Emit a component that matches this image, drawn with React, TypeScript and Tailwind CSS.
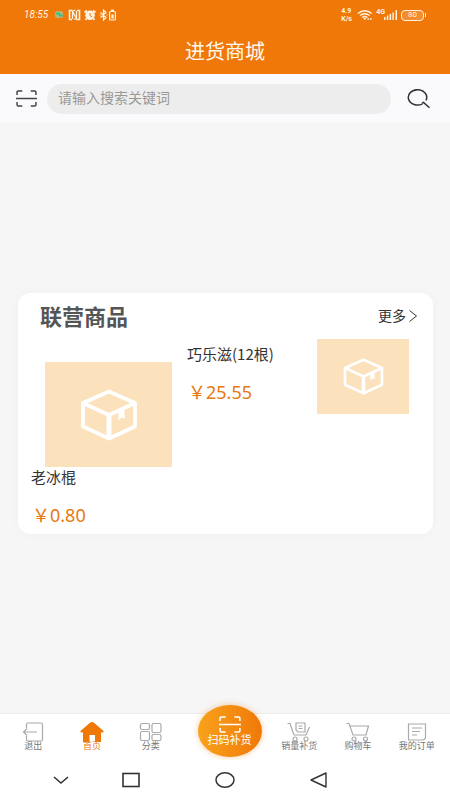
import type { ReactNode } from "react";

interface IconProps {
  className?: string;
}

interface TabItemProps {
  label: string;
  icon: ReactNode;
  active?: boolean;
}

function ScanIcon({ className }: IconProps) {
  return (
    <svg viewBox="0 0 20 17" preserveAspectRatio="none" className={className} fill="none" stroke="currentColor" strokeWidth={1.4}>
      <path d="M1 5V2.2Q1 1 2.2 1H6M14 1h3.8Q19 1 19 2.2V5M1 12v2.8Q1 16 2.2 16H6M14 16h3.8Q19 16 19 14.8V12M0 8.5h20" />
    </svg>
  );
}

function BoxIcon({ className }: IconProps) {
  return (
    <svg viewBox="0 0 56 52" className={className} fill="none" stroke="#fff" strokeWidth={3.8} strokeLinejoin="round">
      <path d="M28 2.5 54 14v23.5L28 49.500 2 37.500V14Z" />
      <path d="M2 14 28 26 54 14" />
      <path d="M28 26v23" strokeWidth={5} />
      <path d="M37.500 21 43.500 18.500V29.500L40.500 28.800 37.500 31.500Z" fill="#fff" stroke="none" />
    </svg>
  );
}

function StatusBar() {
  return (
    <div className="flex h-[30px] items-center justify-between pl-6 pr-6 text-[#fff3e0]">
      <div className="flex items-center">
        <span className="w-[26px] font-['Roboto',sans-serif] text-[10px] italic leading-none">18:55</span>
        <svg width="68" height="12" viewBox="0 0 68 12" className="ml-1" fill="none" stroke="currentColor">
          <rect x="1" y="2" width="8" height="7" rx="2.5" fill="#b4b57a" stroke="none" />
          <path d="M2.5 5.5q2-3 2.800 0t2.700 0" stroke="#14c98f" strokeWidth={1.7} />
          <path d="M18 1.500h-2.500v9H18M23 1.500h2.500v9H23" strokeWidth={1.6} />
          <path d="M18.500 10V2.500l4 7V2M19 2l2.500-1M20 10.500l2.500-1" strokeWidth={1.3} />
          <circle cx="36" cy="6.3" r="4.8" fill="currentColor" stroke="none" />
          <path d="M30.500 3.500 33 1.500M39 1.500l2.500 2M32.500 9.500l-1 1.500M39.500 9.500l1 1.500" strokeWidth={1.7} />
          <path d="M36 4v2.500l2 1.500" stroke="#f07808" strokeWidth={1} />
          <path d="M46.500 3.500 52 8.500 49.500 11V1L52 3.500 46.500 8.500M45.500 6h1M52.500 6h1" strokeWidth={1.2} />
          <rect x="55.6" y="2.5" width="5.8" height="8.5" rx="1" strokeWidth={1.2} />
          <path d="M57 1.300h3" strokeWidth={1.4} />
          <path d="M57.300 5.500h2.400v4h-2.400z" fill="currentColor" stroke="none" />
        </svg>
      </div>
      <div className="flex items-center">
        <div className="w-4 font-['Roboto',sans-serif] text-[7px] font-bold leading-[8px]">
          <div>4.9</div>
          <div>K/s</div>
        </div>
        <svg width="16" height="12" viewBox="0 0 16 12" fill="none" stroke="currentColor" strokeWidth={1.5}>
          <path d="M.8 4.500q7-5.500 14 0M3 6.500q4.800-3.500 9.600 0M5.200 8.500q2.600-1.800 5.200 0" />
          <path d="m6.300 9.300 1.500-.6 1.500.6-1.500 2z" fill="currentColor" stroke="none" />
          <path d="M10.500 10h1.500M13 10h1.500" />
        </svg>
        <div className="ml-[3px] flex items-end">
          <span className="self-start font-['Roboto',sans-serif] text-[7px] font-bold leading-[7px]">4G</span>
          <svg width="14" height="12" viewBox="0 0 14 12" fill="currentColor" className="-ml-px">
            <path d="M0 8h1.500v3H0zM2.800 6.500h1.500V11H2.800zM5.600 5h1.500v6H5.600zM8.400 3.500h1.500V11H8.400zM11.500 1H13v10h-1.500z" />
          </svg>
        </div>
        <div className="ml-[3px] flex h-[11px] w-[23px] items-center justify-center rounded-[4px] border border-current bg-[#f48d2f] font-['Roboto',sans-serif] text-[8px] leading-none">
          80
        </div>
        <div className="ml-px h-1 w-px bg-current" />
      </div>
    </div>
  );
}

function TabItem({ label, icon, active }: TabItemProps) {
  return (
    <button
      type="button"
      className={`flex flex-1 flex-col items-center pt-2 text-[9px] leading-3 ${active ? "text-[#ee7a0c]" : "text-[#777]"}`}
    >
      <svg width="24" height="20" viewBox="0 0 24 20" className={active ? "text-[#f07808]" : "text-[#aaa]"} fill="none" stroke="currentColor" strokeWidth={1.2}>
        {icon}
      </svg>
      <span className="-mt-[2px] whitespace-nowrap">{label}</span>
    </button>
  );
}

export default function App() {
  return (
    <div className="flex min-h-screen flex-col bg-[#f6f6f6] font-['Noto_Sans_CJK_SC',sans-serif] text-[#333]">
      <header className="bg-[#f07808]">
        <StatusBar />
        <h1 className="h-11 text-center text-[20px] leading-[42px] text-[#fff8ee]">进货商城</h1>
      </header>

      <form className="flex h-[49px] items-center bg-[#fafafc] pl-4 pr-5">
        <button type="button" aria-label="扫码" className="text-[#444]">
          <ScanIcon className="h-[17px] w-[21px]" />
        </button>
        <input
          type="text"
          aria-label="搜索"
          placeholder="请输入搜索关键词"
          className="ml-[10px] h-[30px] min-w-0 flex-1 rounded-full bg-[#ededed] px-[11px] pb-[3px] text-[14px] outline-none placeholder:text-[#999]"
        />
        <button type="submit" aria-label="搜索" className="ml-[15px] text-[#333]">
          <svg width="24" height="20" viewBox="0 0 24 20" fill="none" stroke="currentColor" strokeWidth={1.5}>
            <path d="M20 11.300A9.200 7.700 0 1 0 16.500 14.800M16 14.200l1.500-.8 6 5.300" />
          </svg>
        </button>
      </form>

      <main className="flex-1 pl-[18px] pr-[17px] pt-[170px]">
        <section className="rounded-xl bg-white pb-[7px] shadow-[0_0_10px_rgba(0,0,0,0.03)]">
          <div className="flex h-[46px] items-center justify-between pl-[22px] pr-4">
            <h2 className="pb-[3px] text-[22px] font-bold leading-none text-[#555]">联营商品</h2>
            <a href="#more" className="flex items-center gap-[3px] text-[14px] leading-none">
              <span className="pb-[2px]">更多</span>
              <svg width="8" height="12" viewBox="0 0 8 12" fill="none" stroke="currentColor">
                <path d="m.5.5 7 5.500-7 5.500" />
              </svg>
            </a>
          </div>
          <div className="flex items-start px-[13px]">
            <div className="w-[156px] pt-[23px]">
              <div className="ml-[14px] flex h-[105px] w-[127px] items-center justify-center bg-[#fce2bc]">
                <BoxIcon className="h-[52px] w-[56px]" />
              </div>
              <p className="text-[15px] leading-5">老冰棍</p>
              <p className="mt-4 pl-px font-['Noto_Sans','Noto_Sans_CJK_SC',sans-serif] text-[18px] leading-6 text-[#e8790f]">￥0.80</p>
            </div>
            <div className="flex-1 pt-[5px]">
              <p className="text-[15px] leading-5">巧乐滋(12根)</p>
              <p className="mt-4 pl-px font-['Noto_Sans','Noto_Sans_CJK_SC',sans-serif] text-[18px] leading-6 text-[#e8790f]">￥25.55</p>
            </div>
            <div className="mr-[11px] flex h-[75px] w-[92px] items-center justify-center bg-[#fce2bc]">
              <BoxIcon className="h-[37px] w-[41px]" />
            </div>
          </div>
        </section>
      </main>

      <nav className="flex h-[47px] border-t border-[#ececec] bg-white px-1">
        <TabItem
          label="退出"
          icon={<path d="M5.500 6V2.500Q5.500 1 7 1h13q1.500 0 1.500 1.500v15q0 1.500-1.500 1.500H7q-1.500 0-1.500-1.500V14M16 10H2.500M6 6.500 2.500 10 6 13.500" />}
        />
        <TabItem
          label="首页"
          active
          icon={<path d="M12 0q1 0 2 .8L23.500 9q.5 1.500-1 1.500H21V20h-6v-7H9.500v7H3v-9.500H1.500Q0 10.500.5 9L10 .8Q11 0 12 0Z" fill="currentColor" stroke="none" />}
        />
        <TabItem
          label="分类"
          icon={
            <>
              <rect x="1.5" y="1.5" width="9" height="6" rx="1.5" />
              <rect x="13" y="1.5" width="9" height="9" rx="1.5" />
              <rect x="1.5" y="9.5" width="9" height="9" rx="1.5" />
              <rect x="13" y="12.5" width="9" height="6" rx="1.5" />
            </>
          }
        />
        <div className="flex w-[90px] justify-center pl-[9px]">
          <button
            type="button"
            className="-mt-[9px] flex h-[52px] w-16 flex-col items-center rounded-[50%] bg-linear-to-r from-[#f8a21b] to-[#f07808] pt-[11px] text-[11px] leading-[14px] text-white shadow-[0_0_6px_rgba(240,120,8,0.4)]"
          >
            <ScanIcon className="h-[17px] w-[22px] shrink-0" />
            <span className="-mt-px whitespace-nowrap">扫码补货</span>
          </button>
        </div>
        <TabItem
          label="销量补货"
          icon={
            <>
              <path d="M.5 1.500H3L7 13h12l3.500-8" />
              <path d="M9 1h9v9H11l-2-2ZM11.500 4h4M11.500 6.500h4" />
              <circle cx="8" cy="17" r="2" />
              <circle cx="19" cy="17" r="2" />
            </>
          }
        />
        <TabItem
          label="购物车"
          icon={
            <>
              <path d="M.5 1.500H3L7 13h13l2.500-9H4" />
              <circle cx="8" cy="17" r="2" />
              <circle cx="19.5" cy="17" r="2" />
            </>
          }
        />
        <TabItem
          label="我的订单"
          icon={<path d="M3.500 2h17v13q0 3-3.500 3H3.500ZM7 6h10M7 9.500h8M7 13h5" />}
        />
      </nav>

      <div className="flex h-10 items-center gap-[72px] bg-white pl-[50px] text-[#333]">
        <button type="button" aria-label="收起" className="-mr-6">
          <svg width="22" height="16" viewBox="0 0 22 16" fill="none" stroke="currentColor" strokeWidth={1.6}>
            <path d="m4 5 7 6 7-6" />
          </svg>
        </button>
        <button type="button" aria-label="最近任务">
          <svg width="22" height="16" viewBox="0 0 22 16" fill="none" stroke="currentColor" strokeWidth={1.6}>
            <rect x="3" y="1.5" width="16" height="13" />
          </svg>
        </button>
        <button type="button" aria-label="主页">
          <svg width="22" height="16" viewBox="0 0 22 16" fill="none" stroke="currentColor" strokeWidth={1.5}>
            <ellipse cx="11" cy="8" rx="9" ry="7.2" />
          </svg>
        </button>
        <button type="button" aria-label="返回">
          <svg width="22" height="16" viewBox="0 0 22 16" fill="none" stroke="currentColor" strokeWidth={1.4}>
            <path d="M18 1v14L3 8Z" strokeLinejoin="round" />
          </svg>
        </button>
      </div>
    </div>
  );
}
